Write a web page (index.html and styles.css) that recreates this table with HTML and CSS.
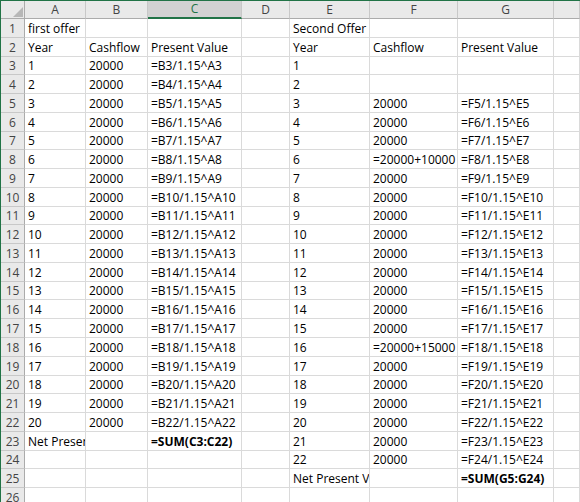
FILE: index.html
```html
<!DOCTYPE html>
<html>
<head>
<meta charset="utf-8">
<link rel="stylesheet" href="styles.css">
</head>
<body>
<div class="sheet">
<div class="h corner"><svg width="24" height="18" viewBox="0 0 24 18"><polygon points="22,6 22,16 12,16" fill="#b7b7b7"/></svg></div>
<div class="h">A</div><div class="h">B</div><div class="h sel">C</div><div class="h">D</div><div class="h">E</div><div class="h">F</div><div class="h">G</div><div class="h"></div>

<div class="r">1</div><div class="c">first offer</div><div class="c"></div><div class="c"></div><div class="c"></div><div class="c">Second Offer</div><div class="c"></div><div class="c"></div><div class="c"></div>
<div class="r">2</div><div class="c">Year</div><div class="c">Cashflow</div><div class="c">Present Value</div><div class="c"></div><div class="c">Year</div><div class="c">Cashflow</div><div class="c">Present Value</div><div class="c"></div>
<div class="r">3</div><div class="c">1</div><div class="c">20000</div><div class="c">=B3/1.15^A3</div><div class="c"></div><div class="c">1</div><div class="c"></div><div class="c"></div><div class="c"></div>
<div class="r">4</div><div class="c">2</div><div class="c">20000</div><div class="c">=B4/1.15^A4</div><div class="c"></div><div class="c">2</div><div class="c"></div><div class="c"></div><div class="c"></div>
<div class="r">5</div><div class="c">3</div><div class="c">20000</div><div class="c">=B5/1.15^A5</div><div class="c"></div><div class="c">3</div><div class="c">20000</div><div class="c">=F5/1.15^E5</div><div class="c"></div>
<div class="r">6</div><div class="c">4</div><div class="c">20000</div><div class="c">=B6/1.15^A6</div><div class="c"></div><div class="c">4</div><div class="c">20000</div><div class="c">=F6/1.15^E6</div><div class="c"></div>
<div class="r">7</div><div class="c">5</div><div class="c">20000</div><div class="c">=B7/1.15^A7</div><div class="c"></div><div class="c">5</div><div class="c">20000</div><div class="c">=F7/1.15^E7</div><div class="c"></div>
<div class="r">8</div><div class="c">6</div><div class="c">20000</div><div class="c">=B8/1.15^A8</div><div class="c"></div><div class="c">6</div><div class="c">=20000+10000</div><div class="c">=F8/1.15^E8</div><div class="c"></div>
<div class="r">9</div><div class="c">7</div><div class="c">20000</div><div class="c">=B9/1.15^A9</div><div class="c"></div><div class="c">7</div><div class="c">20000</div><div class="c">=F9/1.15^E9</div><div class="c"></div>
<div class="r">10</div><div class="c">8</div><div class="c">20000</div><div class="c">=B10/1.15^A10</div><div class="c"></div><div class="c">8</div><div class="c">20000</div><div class="c">=F10/1.15^E10</div><div class="c"></div>
<div class="r">11</div><div class="c">9</div><div class="c">20000</div><div class="c">=B11/1.15^A11</div><div class="c"></div><div class="c">9</div><div class="c">20000</div><div class="c">=F11/1.15^E11</div><div class="c"></div>
<div class="r">12</div><div class="c">10</div><div class="c">20000</div><div class="c">=B12/1.15^A12</div><div class="c"></div><div class="c">10</div><div class="c">20000</div><div class="c">=F12/1.15^E12</div><div class="c"></div>
<div class="r">13</div><div class="c">11</div><div class="c">20000</div><div class="c">=B13/1.15^A13</div><div class="c"></div><div class="c">11</div><div class="c">20000</div><div class="c">=F13/1.15^E13</div><div class="c"></div>
<div class="r">14</div><div class="c">12</div><div class="c">20000</div><div class="c">=B14/1.15^A14</div><div class="c"></div><div class="c">12</div><div class="c">20000</div><div class="c">=F14/1.15^E14</div><div class="c"></div>
<div class="r">15</div><div class="c">13</div><div class="c">20000</div><div class="c">=B15/1.15^A15</div><div class="c"></div><div class="c">13</div><div class="c">20000</div><div class="c">=F15/1.15^E15</div><div class="c"></div>
<div class="r">16</div><div class="c">14</div><div class="c">20000</div><div class="c">=B16/1.15^A16</div><div class="c"></div><div class="c">14</div><div class="c">20000</div><div class="c">=F16/1.15^E16</div><div class="c"></div>
<div class="r">17</div><div class="c">15</div><div class="c">20000</div><div class="c">=B17/1.15^A17</div><div class="c"></div><div class="c">15</div><div class="c">20000</div><div class="c">=F17/1.15^E17</div><div class="c"></div>
<div class="r">18</div><div class="c">16</div><div class="c">20000</div><div class="c">=B18/1.15^A18</div><div class="c"></div><div class="c">16</div><div class="c">=20000+15000</div><div class="c">=F18/1.15^E18</div><div class="c"></div>
<div class="r">19</div><div class="c">17</div><div class="c">20000</div><div class="c">=B19/1.15^A19</div><div class="c"></div><div class="c">17</div><div class="c">20000</div><div class="c">=F19/1.15^E19</div><div class="c"></div>
<div class="r">20</div><div class="c">18</div><div class="c">20000</div><div class="c">=B20/1.15^A20</div><div class="c"></div><div class="c">18</div><div class="c">20000</div><div class="c">=F20/1.15^E20</div><div class="c"></div>
<div class="r">21</div><div class="c">19</div><div class="c">20000</div><div class="c">=B21/1.15^A21</div><div class="c"></div><div class="c">19</div><div class="c">20000</div><div class="c">=F21/1.15^E21</div><div class="c"></div>
<div class="r">22</div><div class="c">20</div><div class="c">20000</div><div class="c">=B22/1.15^A22</div><div class="c"></div><div class="c">20</div><div class="c">20000</div><div class="c">=F22/1.15^E22</div><div class="c"></div>
<div class="r">23</div><div class="c">Net Present Value</div><div class="c"></div><div class="c b">=SUM(C3:C22)</div><div class="c"></div><div class="c">21</div><div class="c">20000</div><div class="c">=F23/1.15^E23</div><div class="c"></div>
<div class="r">24</div><div class="c"></div><div class="c"></div><div class="c"></div><div class="c"></div><div class="c">22</div><div class="c">20000</div><div class="c">=F24/1.15^E24</div><div class="c"></div>
<div class="r">25</div><div class="c"></div><div class="c"></div><div class="c"></div><div class="c"></div><div class="c">Net Present Value</div><div class="c"></div><div class="c b">=SUM(G5:G24)</div><div class="c"></div>
<div class="r">26</div><div class="c"></div><div class="c"></div><div class="c"></div><div class="c"></div><div class="c"></div><div class="c"></div><div class="c"></div><div class="c"></div>
</div>
</body>
</html>
```
FILE: styles.css
```css
html, body {
  margin: 0;
  padding: 0;
  background: #ffffff;
  overflow: hidden;
}
.sheet {
  height: 501px;
  border-top: 1px solid #217346;
  border-left: 1px solid #217346;
  display: grid;
  grid-template-columns: 24px 61px 62px 94px 48px 80px 88px 96px 1fr;
  grid-template-rows: 18px;
  grid-auto-rows: 18.78px;
  overflow: hidden;
  font-family: "Open Sans", "Liberation Sans", sans-serif;
  font-size: 12px;
  color: #000;
}
.h {
  box-sizing: border-box;
  background: #e9e9e9;
  border-right: 1px solid #c8c8c8;
  border-bottom: 1px solid #ababab;
  color: #444;
  display: flex;
  align-items: center;
  justify-content: center;
  line-height: 16px;
}
.corner {
  border-right: 1px solid #ababab;
  position: relative;
}
.corner svg {
  position: absolute;
  left: 0;
  top: 0;
}
.sel {
  background: #d2d2d2;
  color: #217346;
  border-bottom: 2px solid #217346;
}
.r {
  box-sizing: border-box;
  background: #e9e9e9;
  border-right: 1px solid #ababab;
  border-bottom: 1px solid #c8c8c8;
  color: #444;
  display: flex;
  align-items: flex-end;
  justify-content: center;
  line-height: 16px;
}
.c {
  box-sizing: border-box;
  border-right: 1px solid #dadada;
  border-bottom: 1px solid #dadada;
  padding: 0 2px 0 3px;
  white-space: nowrap;
  overflow: hidden;
  display: flex;
  align-items: flex-end;
  line-height: 16px;
}
.b {
  font-weight: bold;
}
```
